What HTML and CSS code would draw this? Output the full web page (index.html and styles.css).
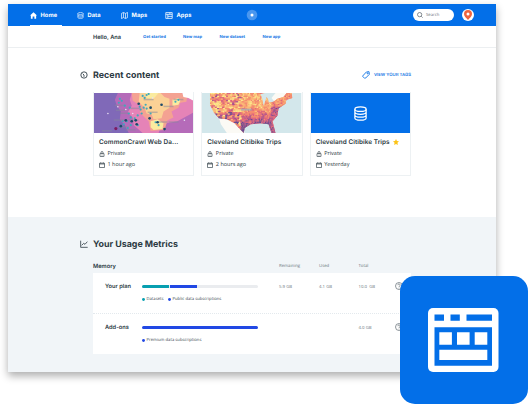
FILE: index.html
```html
<!DOCTYPE html>
<html lang="en">
<head>
<meta charset="utf-8">
<title>Workspace home</title>
<link rel="stylesheet" href="styles.css">
</head>
<body>
<svg width="0" height="0" class="defs">
  <symbol id="db" viewBox="0 0 24 24"><g fill="none" stroke="currentColor" stroke-width="2"><ellipse cx="12" cy="5" rx="9" ry="3.5"/><path d="M3 5v14c0 2 4 3.500 9 3.500s9-1.500 9-3.500V5M3 9.700c0 2 4 3.500 9 3.500s9-1.500 9-3.500M3 14.400c0 2 4 3.500 9 3.500s9-1.500 9-3.500"/></g></symbol>
  <symbol id="lock" viewBox="0 0 24 24"><g fill="none" stroke="currentColor" stroke-width="2.600"><rect x="4" y="10" width="16" height="12" rx="1"/><path d="M8 10V6a4 4 0 0 1 8 0v4M12 14v4"/></g></symbol>
  <symbol id="cal" viewBox="0 0 24 24"><path fill="none" stroke="currentColor" stroke-width="2.600" d="M2 5h20v17H2zM2 8h20M7 1v5M17 1v5"/></symbol>
  <symbol id="help" viewBox="0 0 24 24"><g fill="none" stroke="currentColor" stroke-width="2"><circle cx="12" cy="12" r="10.500"/><path d="M8.500 9.500a3.500 3.500 0 1 1 5 3c-1.200.6-1.500 1-1.500 2.500M12 17v2"/></g></symbol>
  <symbol id="dot" viewBox="0 0 6 6"><circle cx="3" cy="3" r="2.900" fill="currentColor"/></symbol>
</svg>
<div class="window">
  <header class="topbar">
    <nav class="nav">
      <a class="nav-item active"><svg viewBox="0 0 24 24"><path fill="currentColor" d="M12 1 0 12h3v11h6v-8h6v8h6V12h3z"/></svg><span>Home</span></a>
      <a class="nav-item"><svg viewBox="0 0 24 24"><use href="#db"/></svg><span>Data</span></a>
      <a class="nav-item"><svg viewBox="0 0 24 24"><path fill="none" stroke="currentColor" stroke-width="2.400" d="m1.500 5 7-3.500 7 3.500 7-3.500V19l-7 3.500-7-3.500-7 3.500zM8.500 2v17M15.500 5v17"/></svg><span>Maps</span></a>
      <a class="nav-item"><svg class="apps" viewBox="0 0 26 24"><path fill="none" stroke="currentColor" stroke-width="2.600" d="M2 2h22v20H2zM2 8h22M9 8v14M9 15h15M16 2v6"/></svg><span>Apps</span></a>
    </nav>
    <svg class="orb" viewBox="0 0 12 12"><circle cx="6" cy="6" r="5.300" fill="#4a97ef"/><circle cx="6" cy="6" r="1.500" fill="#fff"/></svg>
    <div class="search"><svg viewBox="0 0 24 24"><path fill="none" stroke="currentColor" stroke-width="2.600" d="M10.500 2a8.500 8.500 0 1 0 0 17 8.500 8.500 0 0 0 0-17zM17 17l5.500 5.500"/></svg><span>Search</span></div>
    <div class="avatar"><svg viewBox="0 0 16 20"><path fill="#f0643f" fill-rule="evenodd" d="M8 0a8 8 0 0 0-8 8c0 5 5 8 8 12 3-4 8-7 8-12a8 8 0 0 0-8-8zm0 5a3 3 0 1 1 0 6 3 3 0 0 1 0-6z"/></svg></div>
  </header>
  <div class="subbar">
    <strong>Hello, Ana</strong>
    <a>Get started</a><a>New map</a><a>New dataset</a><a>New app</a>
  </div>
  <section class="recent">
    <div class="section-head">
      <svg class="head-icon" viewBox="0 0 24 24"><g fill="none" stroke="currentColor" stroke-width="2.600"><circle cx="12" cy="12" r="9.500"/><path d="M12 17.500V12L8 8"/></g></svg>
      <h2 class="title-recent">Recent content</h2>
      <a class="tags"><svg viewBox="0 0 24 24"><g fill="none" stroke="currentColor" stroke-width="2.800"><path d="m2 15 11-12 8-1 1 8L11 21l-3 1-6-6z"/><circle cx="17" cy="7" r="1.500"/></g></svg><span>VIEW YOUR TAGS</span></a>
    </div>
    <div class="cards">
      <article class="card">
        <svg class="thumb" viewBox="0 0 100 41" preserveAspectRatio="none" id="cluster-map">
          <rect width="100" height="41" fill="#8069b8"/>
          <path fill="#b56bb9" d="m24 0-3 7 2 6 4 6-1 8 5 6 4 8h65V0z"/>
          <path fill="#e583b7" d="m38 0-2 7 2 6-4 7 5 5 1 8 9 8h51V0z"/>
          <path fill="#b56bb9" d="m65 41 2-6 6-4 11-2 16-9v21z"/>
          <path fill="#f4a292" d="m38 0 1 8 8 5-1 7 5 5 4 4 2 10 14-1 3-10 6-3-2-6 7-4 2-5 6-1 1-6-6-3z"/>
          <path fill="#fbd195" d="m46 0-1 9 6 6 2 6 5 1 2 5 8-1 2-7 6-4V6l-5-2-4-4z"/>
          <path fill="#faeb9f" d="m52 0 1 5 7 1 5-6zm5 29 7-2 6 4-1 6-9 1-3-3zm22-22 6-2 2 3-2 4-6 1z"/>
          <path fill="#fff" d="M89 0h11v8l-5-3-5-1z"/>
        </svg>
        <div class="card-body">
          <h3 class="wide-title">CommonCrawl Web Da...</h3>
          <p><svg><use href="#lock"/></svg><span>Private</span></p>
          <p><svg><use href="#cal"/></svg><span>1 hour ago</span></p>
        </div>
      </article>
      <article class="card">
        <svg class="thumb" viewBox="0 0 100 41" preserveAspectRatio="none">
          <rect width="100" height="41" fill="#d3e7eb"/>
          <path fill="#fbfaf5" d="m17 25 9 0 14 8 3 8H25l-6-9zM70 5l4-5h17l-2 4-7 3-9 2z"/>
          <clipPath id="land"><path d="M8 0v12l4 8 5 6 8 1 8 4 5 6 4 4 1-5 6-4 10-1 8 1 3 9h4l-3-12 5-6 1-7 7-5 1-4 6-2-1-7-4 1-4 5-6 2-4 3-5 1-1-7-4-3H8z"/></clipPath>
          <g id="density-map" clip-path="url(#land)"></g>
          <path fill="#d3e7eb" d="m59 1 5-1 5 4-2 3-2-3-3 9-1-6z"/>
          <path fill="#9ab3bd" opacity=".7" d="M39 16h11v2H39z"/>
        </svg>
        <div class="card-body">
          <h3>Cleveland Citibike Trips</h3>
          <p><svg><use href="#lock"/></svg><span>Private</span></p>
          <p><svg><use href="#cal"/></svg><span>2 hours ago</span></p>
        </div>
      </article>
      <article class="card">
        <div class="thumb data-thumb"><svg><use href="#db"/></svg></div>
        <div class="card-body">
          <h3>Cleveland Citibike Trips<svg class="star" viewBox="0 0 24 24"><path fill="#fcc419" d="m12 0 3.700 8 8.300 1-6.200 6 1.700 9-7.500-4.500L4.500 24l1.700-9L0 9l8.300-1z"/></svg></h3>
          <p><svg><use href="#lock"/></svg><span>Private</span></p>
          <p><svg><use href="#cal"/></svg><span>Yesterday</span></p>
        </div>
      </article>
    </div>
  </section>
  <section class="usage">
    <div class="section-head">
      <svg class="head-icon" viewBox="0 0 24 24"><path fill="none" stroke="currentColor" stroke-width="2.400" d="M2 2v20h21M5 16l6-6 4 3 7-8"/></svg>
      <h2 class="title-usage">Your Usage Metrics</h2>
    </div>
    <div class="table-head"><strong>Memory</strong><span>Remaining</span><span>Used</span><span>Total</span></div>
    <div class="panel">
      <div class="row">
        <strong class="plan">Your plan</strong>
        <div class="meter">
          <div class="bar"><i class="teal" style="width:24%"></i><i class="blue" style="width:23.500%"></i></div>
          <div class="legend"><span class="key"><svg class="k-teal"><use href="#dot"/></svg>Datasets</span><span class="key"><svg><use href="#dot"/></svg>Public data subscriptions</span></div>
        </div>
        <span>5.9 GB</span><span>4.1 GB</span><span>10.0 &nbsp;GB</span><svg class="help"><use href="#help"/></svg>
      </div>
      <div class="row">
        <strong class="addons">Add-ons</strong>
        <div class="meter">
          <div class="bar"><i class="blue" style="width:100%"></i></div>
          <div class="legend"><span class="key"><svg><use href="#dot"/></svg>Premium data subscriptions</span></div>
        </div>
        <span></span><span></span><span>4.0 GB</span><svg class="help"><use href="#help"/></svg>
      </div>
    </div>
  </section>
</div>
<div class="badge">
  <svg viewBox="0 0 128 128">
    <rect x="28" y="32" width="70.500" height="64" rx="5" fill="#fff"/>
    <path fill="#036fe8" d="M34.500 38.500H44v6.300h-9.500zM50.500 38.500h9.300v6.300h-9.300zM66.500 38.500H92v6.300H66.500zM34.500 51.200H92v38.500H34.500z"/>
    <path fill="#fff" d="M39.300 56.200h12.600v12.500H39.300zM57 56.200h12.600v12.500H57zM74.700 56.200h12.600v12.500H74.700zM39.300 73.800h48v10.300h-48z"/>
  </svg>
</div>
<script src="maps.js"></script>
</body>
</html>
```
FILE: styles.css
```css
* { box-sizing: border-box; }
html, body { margin: 0; width: 528px; height: 404px; overflow: hidden; background: #fff; }
body { padding: 4px 0 0 8px; font-family: "Open Sans", "Noto Sans", sans-serif; color: #2c3a43; position: relative; text-rendering: geometricPrecision; }
svg { display: block; flex: none; }
.defs { position: absolute; }
h2, h3, p { margin: 0; }
span, strong, a, h2, h3 { white-space: nowrap; }
strong, h2, h3, .nav-item, .subbar a, .tags { font-family: Inter, "Open Sans", sans-serif; }

.window { width: 488px; height: 368px; background: #fff; box-shadow: 0 4px 8px rgba(0, 0, 0, .32); display: flex; flex-direction: column; }

.topbar { height: 22px; flex: none; background: #036fe8; color: #fff; display: flex; align-items: center; padding-left: 22px; }
.nav { display: grid; grid-template-columns: 47px 44px 44px 73px; height: 22px; }
.nav-item { display: flex; align-items: center; gap: 3.500px; height: 22px; font-size: 5.700px; font-weight: 700; letter-spacing: .1px; }
.nav-item svg { width: 7px; height: 7px; }
.nav-item svg.apps { width: 8px; }
.nav-item.active { width: 32px; border-bottom: 1px solid #fff; padding-top: 1px; }
.orb { width: 12px; height: 12px; margin-left: 8px; }
.search { margin-left: 155px; width: 41px; height: 12px; border-radius: 6px; background: #fff; color: #46515a; display: flex; align-items: center; gap: 3px; padding-left: 4px; font-size: 4.200px; }
.search svg { width: 6px; height: 6px; }
.search span { color: #6c757c; }
.avatar { margin-left: 8px; width: 12px; height: 12px; border-radius: 50%; background: #fff; display: flex; align-items: center; justify-content: center; }
.avatar svg { width: 8px; height: 10px; }

.subbar { height: 22px; flex: none; border-bottom: 1px solid #eceff1; padding: 1px 0 0 85px; display: grid; grid-template-columns: 50px 40px 36.500px 43px auto; align-items: center; justify-content: start; }
.subbar strong { font-size: 5.700px; font-weight: 600; }
.subbar a { font-size: 4.200px; font-weight: 700; color: #1777e5; }

.recent { height: 169px; flex: none; padding: 20px 85px 0 72px; }
.section-head { display: flex; align-items: center; height: 14px; }
.head-icon { width: 8px; height: 8px; margin-right: 5px; }
.section-head h2 { font-size: 8.900px; font-weight: 700; line-height: 14px; padding-top: 1px; }
.title-recent { letter-spacing: .04px; }
.tags { margin-left: auto; margin-top: -1px; display: flex; align-items: center; gap: 4px; color: #1777e5; font-size: 4.300px; font-weight: 600; }
.tags span { padding-top: 1px; }
.tags svg { width: 8px; height: 8px; }
.cards { margin: 10px 0 0 13px; display: grid; grid-template-columns: repeat(3, 1fr); gap: 7px; }
.card { height: 84px; border: 1px solid #edf1f3; border-top: 0; padding-top: 1px; }
.thumb { width: 100%; height: 40px; }
.data-thumb { background: #036fe8; color: #fff; display: flex; align-items: center; justify-content: center; }
.data-thumb svg { width: 15px; height: 15px; }
.card-body { padding: 3px 0 0 5px; }
.card h3 { font-size: 6.400px; font-weight: 600; line-height: 12px; letter-spacing: .05px; display: flex; align-items: center; }
.card h3.wide-title { letter-spacing: .1px; }
.card .star { width: 6px; height: 6px; margin-left: 3px; }
.card p { display: flex; align-items: center; gap: 2.500px; height: 11px; font-size: 5.500px; line-height: 11px; }
.card p svg { width: 6px; height: 6px; }

.usage { flex: 1; background: #f1f5f8; padding: 20px 0 0 72px; }
.table-head { margin-left: 13px; height: 15px; margin-top: 7px; padding-top: 1px; display: grid; grid-template-columns: 186px 40px 39.500px auto; align-items: center; justify-content: start; }
.table-head strong { font-size: 5.700px; font-weight: 600; }
.table-head span { font-size: 4.300px; color: #6b757e; }
.panel { margin-left: 13px; width: 318px; background: #fff; }
.row { height: 40px; display: grid; grid-template-columns: 36.500px 137.500px 40px 39.500px 36.500px auto; align-items: start; justify-content: start; padding: 8px 0 0 12px; }
.row + .row { height: 40.500px; border-top: 1px dotted #e3e9ed; }
.row > strong { font-size: 5.700px; font-weight: 600; line-height: 11px; }
.row > span { font-size: 4.300px; color: #6b757e; line-height: 12px; }
.help { width: 8px; height: 8px; margin-top: 1px; color: #56626b; }
.bar { width: 116.500px; height: 3px; margin-top: 4px; border-radius: 2px; background: #eaecef; display: flex; gap: .5px; overflow: hidden; }
.bar i { height: 3px; }
.bar .teal { background: #079fb0; }
.bar .blue { background: #2148e4; }
.legend { display: flex; gap: 4px; margin-top: 7.500px; line-height: 7px; }
.key { font-size: 4.200px; color: #3b4750; display: flex; align-items: center; gap: 2px; }
.key svg { width: 3px; height: 3px; color: #2148e4; }
.key svg.k-teal { color: #079fb0; }

.badge { position: absolute; left: 400px; top: 276px; width: 128px; height: 128px; border-radius: 15px; background: #036fe8; }
.badge svg { width: 128px; height: 128px; }
```
FILE: maps.js
```js
const NS = 'http://www.w3.org/2000/svg';
let seed = 11;
const rand = () => (seed = (seed * 16807) % 2147483647) / 2147483647;

function shape(parent, name, attrs) {
  const el = document.createElementNS(NS, name);
  Object.entries(attrs).forEach(([k, v]) => el.setAttribute(k, v));
  parent.appendChild(el);
}

// County-like cells: bright in the north west, darker along the south and east.
const density = document.getElementById('density-map');
const ramp = ['#fde68a', '#fcb878', '#f58b70', '#dc6480', '#a85291', '#684a93'];
shape(density, 'rect', { width: 100, height: 41, fill: '#f0946f' });
for (let y = 0; y < 41; y += 1.4) {
  let x = 7;
  while (x < 94) {
    const w = x < 38 ? 1.4 + rand() * 1.5 : 1.3;
    const spread = x < 38 ? 4.8 : 2.2;
    const wave = Math.sin(x * .55 + y * .3) + Math.cos(y * .65 - x * .21);
    let base = 1.3 + wave * .65;
    if (x > 38) base = 1 + wave * .3 + Math.max(0, y - 12) * .17;
    if (x < 36 && y > 19) base += 1.6;
    if (x > 69) base = 1.8 + (y > 14 ? 1.8 : 0);
    const i = Math.max(0, Math.min(5, Math.round(base + (rand() - .5) * spread)));
    shape(density, 'rect', { x, y, width: w + .1, height: 1.5, fill: ramp[i] });
    x += w;
  }
}

// Town markers and their faint labels.
const cluster = document.getElementById('cluster-map');
const dots = (points, r, fill) => points.forEach(([cx, cy]) => shape(cluster, 'circle', { cx, cy, r, fill }));
[[21,12],[22,17],[37,15],[26,20],[20,27],[35,27],[25,34],[50,6],[70,13],[54,19],[75,29],[8,38],[80,6],[64,29],[32,37]]
  .forEach(([x, y]) => shape(cluster, 'rect', { x, y, width: 10, height: 1.5, fill: '#85899c', opacity: .5 }));
dots([[26,6],[25,10],[28,8],[31,13],[36,15],[35,21],[37,25],[33,29],[41,26],[44,33],[48,21],[50,15],[52,12],[49,3],[53,2],[55,1],[57,21],[53,16],[47,17],[44,23],[30,32],[27,34],[29,29],[34,36],[37,33],[82,9],[85,7],[62,30],[65,33],[51,5],[46,14]], 1.1, '#3fa9bc');
dots([[45,11],[57,15],[68,12],[56,26],[71,37],[42,28],[32,28],[38,29],[27,34],[64,30],[43,32]], 1.35, '#1b4a69');
dots([[14,21],[32,17],[91,28],[39,21],[24,14],[59,5]], .8, '#e7dff2');
dots([[22,36.5]], 1.6, '#7d1c62');
```
